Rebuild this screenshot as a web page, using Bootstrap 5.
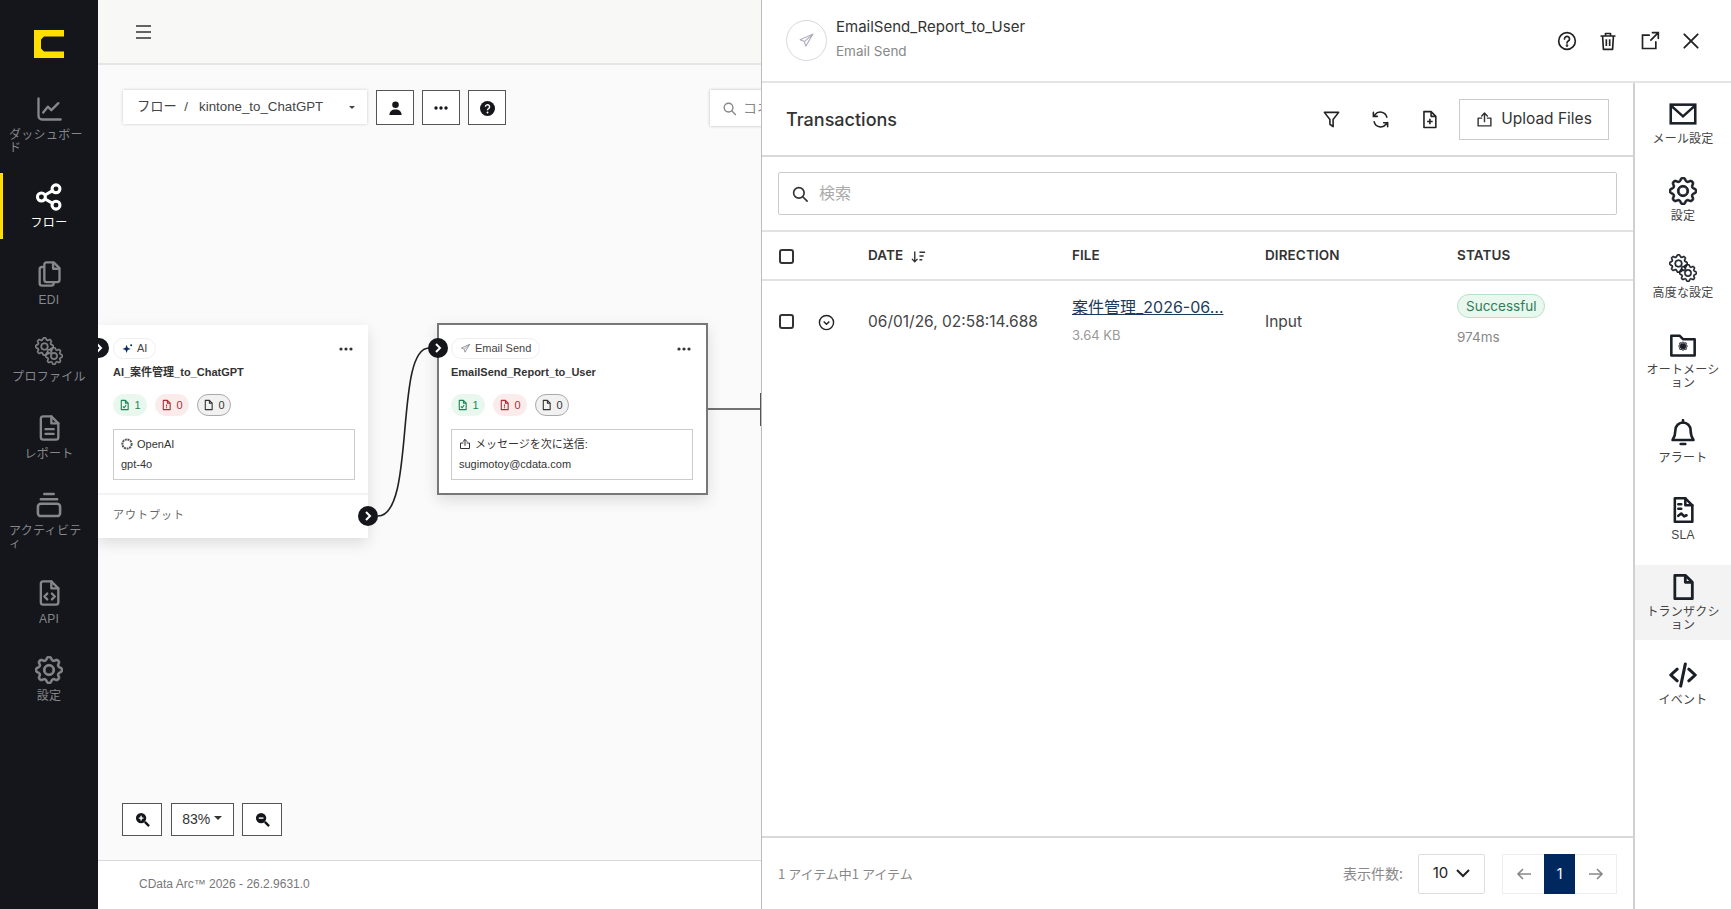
<!DOCTYPE html>
<html lang="ja">
<head>
  <meta charset="UTF-8">
  <meta name="viewport" content="width=device-width, initial-scale=1.0">
  <title>CData Arc</title>
  <link href="https://cdn.jsdelivr.net/npm/bootstrap@5.3.2/dist/css/bootstrap.min.css" rel="stylesheet">
  <style>
    html, body { height: 100%; overflow: hidden; }
    body { font-family: "Liberation Sans", "Noto Sans CJK JP", sans-serif; color: #333; background: #fff; }
    .app-shell { height: 909px; }

    /* left navigation */
    .side-nav { width: 98px; background: #14161b; flex-shrink: 0; }
    .side-logo { height: 85px; padding: 30px 0 0 34px; }
    .nav-cell { padding: 10px 0 9px; margin-bottom: 11px; color: #85878a; font-size: 12px; line-height: 13px; letter-spacing: .3px; border-left: 3px solid transparent; margin-right: 3px; }
    .nav-cell.wrapped { margin-bottom: 9px; }
    .nav-cell.wrapped span { width: 80px; }
    .nav-cell.current { color: #fff; border-left-color: #ffdf00; }
    .nav-cell svg { width: 28px; height: 28px; margin-bottom: 6px; }

    /* flow canvas */
    .flow-area { min-width: 0; background: #fafafa; }
    .top-strip { height: 65px; background: #f8f8f7; border-bottom: 2px solid #e6e6e6; padding-left: 38px; }
    .flow-canvas { overflow: hidden; padding: 25px 0 0 25px; }
    .crumb-box { width: 244px; height: 34px; background: #fff; box-shadow: 0 0 3px rgba(0,0,0,.2); border-radius: 0; font-size: 13.3px; color: #444; padding: 0 11px 0 13px; flex-shrink: 0; margin-right: 9px; }
    .crumb-box::after { margin-left: auto; }
    .sq-btn { width: 38px; height: 35px; border: 1.5px solid #555; border-radius: 0; background: #fff; padding: 0; flex-shrink: 0; }
    .sq-btn.zoom-btn { width: 40px; height: 33px; }
    .sq-btn.zoom-pct { width: 63px; height: 33px; font-size: 14px; color: #333; }
    .canvas-search { width: 200px; height: 36px; background: #fff; box-shadow: 0 0 3px rgba(0,0,0,.25); margin-left: 204px; padding-left: 12px; color: #888; font-size: 14px; flex-shrink: 0; gap: 6px; }
    .flow-lines { position: absolute; left: 0; top: -1px; width: 664px; height: 732px; }
    .flow-node { position: absolute; background: #fff; box-shadow: 0 5px 14px rgba(0,0,0,.12); font-size: 11px; }
    .node-one { left: 0; top: 260px; width: 270px; height: 213px; padding: 13px 13px 0 15px; }
    .node-two { left: 339px; top: 258px; width: 271px; height: 172px; padding: 13px 13px 0 12px; border: 2px solid #777; }
    .kind-chip { height: 21px; padding: 0 8px; background: #fff; border: 1px solid #eee; border-radius: 11px; font-size: 11px; color: #444; }
    .node-dots { margin-right: 2px; }
    .node-name { font-size: 11px; font-weight: 700; color: #333; margin: 6px 0 15px; line-height: 14px; white-space: nowrap; }
    .count-pill { width: 34px; height: 22px; padding: 0; font-size: 11px; font-weight: 400; border-radius: 11px; }
    .count-pill svg { width: 11px; height: 14px; }
    .count-ok { background: #e9f7ef; color: #198754; }
    .count-bad { background: #fbecec; color: #b02a37; }
    .count-idle { background: #f1f1f1; color: #333; border: 1px solid #aaa; }
    .node-info { border: 1px solid #ccc; height: 51px; padding: 4px 7px; margin-top: 13px; line-height: 20px; color: #333; font-size: 11px; }
    .node-out { margin: 13px -13px 0 -15px; border-top: 2px solid #f3f3f3; padding: 12px 15px; color: #666; font-size: 11px; letter-spacing: 1px; }
    .port { position: absolute; width: 20px; height: 20px; border-radius: 50%; background: #14161b; z-index: 2; }
    .port-in-one { left: -9px; top: 273px; }
    .port-in-two { left: 330px; top: 273px; }
    .port-out-one { left: 260px; top: 441px; }
    .zoom-tools { position: absolute; left: 24px; top: 738px; gap: 8.5px; }
    .flow-foot { height: 49px; background: #fff; border-top: 1px solid #d8d8d8; padding: 0 0 2px 41px; font-size: 12px; color: #777; }

    /* right panel */
    .side-panel { width: 970px; flex-shrink: 0; background: #fff; border-left: 1px solid #bbb; font-family: Inter, "Noto Sans CJK JP", sans-serif; z-index: 3; }
    .panel-head { height: 83px; border-bottom: 2px solid #e4e4e4; padding: 0 30px 0 24px; }
    .plane-ring { width: 41px; height: 41px; border: 1px solid #d5d9de; border-radius: 50%; color: #aab; margin-right: 9px; }
    .panel-title { font-size: 15px; line-height: 20px; color: #333; margin-top: -4px; }
    .panel-sub { font-size: 13.5px; line-height: 20px; color: #888; margin-top: 4px; }
    .head-icon { width: 20px; height: 20px; margin-left: 21.5px; color: #222; }
    .tx-bar { height: 74px; border-bottom: 2px solid #d9d9d9; padding: 0 24px 0 24px; }
    .tx-title { font-size: 18px; font-weight: 500; color: #333; }
    .tx-icon { width: 19px; height: 19px; margin-right: 30px; color: #222; }
    .tx-icon.last-tool { margin-right: 20px; }
    .upload-btn { width: 150px; height: 41px; border: 1px solid #ccc; border-radius: 0; font-size: 15.5px; color: #333; background: #fff; padding: 0; }
    .search-strip { height: 75px; border-bottom: 2px solid #e2e2e2; padding: 15px 16px 0 16px; }
    .search-wrap { height: 43px; border: 1px solid #ccc; border-radius: 2px; }
    .search-wrap .input-group-text { background: #fff; border: 0; padding: 0 0 0 12px; }
    .search-wrap .search-glass { width: 18px; height: 18px; color: #333; }
    .search-wrap .form-control { border: 0; font-size: 16px; padding: 0 0 3px 11px; box-shadow: none; font-family: "Noto Sans CJK JP", sans-serif; }
    .search-wrap .form-control::placeholder { color: #aaa; }
    .tx-table { table-layout: fixed; width: 871px; margin: 0; }
    .tx-table th { height: 48px; font-size: 13.5px; font-weight: 600; letter-spacing: .1px; color: #333; border-bottom: 2px solid #e2e2e2; padding: 0 0 0 11px; vertical-align: middle; }
    .tx-table td { height: 82px; border: 0; padding: 0 0 0 11px; vertical-align: middle; font-size: 15.5px; color: #444; }
    .tx-table td.row-toggle { padding-left: 8px; }
    .tx-table .col-check { width: 48px; }
    .tx-table .col-toggle { width: 47px; }
    .tx-table .col-date { width: 204px; }
    .tx-table .col-file { width: 193px; }
    .tx-table .col-dir { width: 192px; }
    .tx-table .form-check-input { width: 15px; height: 15px; margin: 4px 0 0 6px; border: 2px solid #333; border-radius: 3px; }
    .tx-table .file-link { display: block; font-size: 16px; color: #1c3a5a; white-space: nowrap; margin-top: -3px; line-height: 22px; }
    .file-size { font-size: 13px; color: #999; margin-top: 8px; line-height: 18px; }
    .done-pill { display: inline-block; padding: 0 8px; height: 24px; line-height: 22px; background: #e9f7ef; border: 1px solid #b6e2c8; border-radius: 12px; font-size: 13.5px; font-weight: 400; color: #2e7d55; margin-top: -4px; }
    .took-time { font-size: 13.5px; color: #888; line-height: 18px; margin: 10px 0 4px; }
    .panel-foot { height: 73px; border-top: 2px solid #d9d9d9; padding: 0 16px; font-size: 13px; color: #888; font-family: "Noto Sans CJK JP", sans-serif; }
    .per-page { font-size: 14px; }
    .size-pick { width: 67px; height: 40px; border: 1px solid #ddd; border-radius: 2px; font-family: Inter, sans-serif; font-size: 15px; color: #222; background: #fff; margin: 0 17px 0 15px; padding: 0; }
    .pager .page-link { height: 40px; width: 43px; padding: 0; display: flex; align-items: center; justify-content: center; border-radius: 0 !important; border-color: #eee; color: #888; background: #fff; }
    .pager .page-item.active .page-link { width: 31px; background: #00285e; border-color: #00285e; color: #fff; font-family: Inter, sans-serif; font-size: 14px; }
    .tool-rail { width: 98px; flex-shrink: 0; border-left: 2px solid #d0d0d0; padding-top: 9px; }
    .rail-cell { padding: 8px 0; margin-bottom: 15px; font-size: 12px; line-height: 13px; color: #444; font-family: "Liberation Sans", "Noto Sans CJK JP", sans-serif; letter-spacing: .2px; }
    .rail-cell.wrapped { margin-bottom: 13px; }
    .rail-cell.current { background: #f3f3f3; }
    .rail-cell svg { width: 28px; height: 28px; margin-bottom: 5px; color: #1b1f27; }
  </style>
</head>
<body>
  <svg width="0" height="0" class="position-absolute">
    <defs>
      <symbol id="ic-gear" viewBox="0 0 16 16"><g fill="currentColor" stroke="currentColor" stroke-width=".5"><path d="M8 4.754a3.246 3.246 0 1 0 0 6.492 3.246 3.246 0 0 0 0-6.492zM5.754 8a2.246 2.246 0 1 1 4.492 0 2.246 2.246 0 0 1-4.492 0z"/><path d="M9.796 1.343c-.527-1.79-3.065-1.79-3.592 0l-.094.319a.873.873 0 0 1-1.255.52l-.292-.16c-1.64-.892-3.433.902-2.54 2.541l.159.292a.873.873 0 0 1-.52 1.255l-.319.094c-1.79.527-1.79 3.065 0 3.592l.319.094a.873.873 0 0 1 .52 1.255l-.16.292c-.892 1.64.901 3.434 2.541 2.54l.292-.159a.873.873 0 0 1 1.255.52l.094.319c.527 1.79 3.065 1.79 3.592 0l.094-.319a.873.873 0 0 1 1.255-.52l.292.16c1.64.893 3.434-.902 2.54-2.541l-.159-.292a.873.873 0 0 1 .52-1.255l.319-.094c1.79-.527 1.79-3.065 0-3.592l-.319-.094a.873.873 0 0 1-.52-1.255l.16-.292c.893-1.64-.902-3.433-2.541-2.54l-.292.159a.873.873 0 0 1-1.255-.52l-.094-.319zm-2.633.283c.246-.835 1.428-.835 1.674 0l.094.319a1.873 1.873 0 0 0 2.693 1.115l.291-.16c.764-.415 1.6.42 1.184 1.185l-.159.292a1.873 1.873 0 0 0 1.116 2.692l.318.094c.835.246.835 1.428 0 1.674l-.319.094a1.873 1.873 0 0 0-1.115 2.693l.16.291c.415.764-.42 1.6-1.185 1.184l-.291-.159a1.873 1.873 0 0 0-2.693 1.116l-.094.318c-.246.835-1.428.835-1.674 0l-.094-.319a1.873 1.873 0 0 0-2.692-1.115l-.292.16c-.764.415-1.6-.42-1.184-1.185l.159-.291A1.873 1.873 0 0 0 1.945 8.93l-.319-.094c-.835-.246-.835-1.428 0-1.674l.319-.094A1.873 1.873 0 0 0 3.06 4.377l-.16-.292c-.415-.764.42-1.6 1.185-1.184l.292.159a1.873 1.873 0 0 0 2.692-1.115l.094-.319z"/></g></symbol>
      <symbol id="ic-gears" viewBox="0 0 28 28"><use href="#ic-gear" x="0" y="0" width="19" height="19"/><use href="#ic-gear" x="10" y="10" width="18" height="18"/></symbol>
      <symbol id="ic-chart" viewBox="0 0 24 24"><g fill="none" stroke="currentColor" stroke-width="2" stroke-linecap="round" stroke-linejoin="round"><path d="M3 3v15a3 3 0 0 0 3 3h16"/><path d="M7 15l4-5 3 3 6-6"/></g></symbol>
      <symbol id="ic-share" viewBox="0 0 24 24"><g fill="none" stroke="currentColor" stroke-width="2.6"><circle cx="18" cy="5" r="3.4"/><circle cx="5.5" cy="12" r="3.4"/><circle cx="18" cy="19" r="3.4"/><path d="M8.6 10.3l6.2-3.6M8.6 13.7l6.2 3.6"/></g></symbol>
      <symbol id="ic-files" viewBox="0 0 24 24"><g fill="none" stroke="currentColor" stroke-width="2" stroke-linejoin="round"><path d="M10 2h6l5 5v10a2 2 0 0 1-2 2h-9a2 2 0 0 1-2-2V4a2 2 0 0 1 2-2z"/><path d="M15.5 2v5.500H21"/><path d="M8 6H6a2 2 0 0 0-2 2v12a2 2 0 0 0 2 2h8a2 2 0 0 0 2-2v-1"/></g></symbol>
      <symbol id="ic-report" viewBox="0 0 24 24"><g fill="none" stroke="currentColor" stroke-width="2" stroke-linejoin="round" stroke-linecap="round"><path d="M7 2h7l6 6v12a2 2 0 0 1-2 2H7a2 2 0 0 1-2-2V4a2 2 0 0 1 2-2z"/><path d="M14 2v6h6"/><path d="M9 13h7M9 17h7"/></g></symbol>
      <symbol id="ic-stack" viewBox="0 0 24 24"><g fill="none" stroke="currentColor" stroke-width="2.200" stroke-linecap="round"><path d="M8 2.500h8M5 7h14"/><rect x="2.500" y="11" width="19" height="10.500" rx="2.500"/></g></symbol>
      <symbol id="ic-filecode" viewBox="0 0 24 24"><g fill="none" stroke="currentColor" stroke-width="2" stroke-linejoin="round" stroke-linecap="round"><path d="M7 2h7l6 6v12a2 2 0 0 1-2 2H7a2 2 0 0 1-2-2V4a2 2 0 0 1 2-2z"/><path d="M14 2v6h6"/><path d="M10.500 12.500l-2.500 2.500 2.500 2.500M14.500 12.500l2.500 2.500-2.500 2.500"/></g></symbol>
      <symbol id="ic-mail" viewBox="0 0 24 24"><g fill="none" stroke="currentColor" stroke-width="2.200"><rect x="1.500" y="4" width="21" height="16"/><path d="M2 5l10 9 10-9"/></g></symbol>
      <symbol id="ic-folder" viewBox="0 0 24 24"><g fill="none" stroke="currentColor" stroke-width="2.200" stroke-linejoin="round"><path d="M2 4h7l3 3h10v14H2z"/></g><use href="#ic-gear" x="8" y="9" width="8" height="8"/><circle cx="12" cy="13" r="2.600" fill="currentColor"/></symbol>
      <symbol id="ic-bell" viewBox="0 0 24 24"><g fill="none" stroke="currentColor" stroke-width="2.200" stroke-linecap="round" stroke-linejoin="round"><path d="M12 3a6.500 6.500 0 0 0-6.500 6.500c0 5-1.500 7-2.500 8.500h18c-1-1.500-2.500-3.500-2.500-8.500A6.500 6.500 0 0 0 12 3z"/><path d="M12 1v2M10 21.500h4"/></g></symbol>
      <symbol id="ic-sla" viewBox="0 0 24 24"><g fill="none" stroke="currentColor" stroke-width="2.200" stroke-linejoin="round" stroke-linecap="round"><path d="M5 2h9l6 6v14H5z"/><path d="M14 2v6h6"/><path d="M8 7h2.500M8 11h2.500M8 17l2.500-2 2.500 2.500 2-1"/></g></symbol>
      <symbol id="ic-file" viewBox="0 0 24 24"><g fill="none" stroke="currentColor" stroke-width="2.400" stroke-linejoin="round"><path d="M5 2h9l6 6v14H5z"/><path d="M14 2v6h6"/></g></symbol>
      <symbol id="ic-file-ok" viewBox="0 0 24 24"><g fill="none" stroke="currentColor" stroke-width="2.400" stroke-linejoin="round"><path d="M5 2h9l6 6v14H5z"/><path d="M14 2v6h6M8.500 15l3 3 4-6"/></g></symbol>
      <symbol id="ic-file-bad" viewBox="0 0 24 24"><g fill="none" stroke="currentColor" stroke-width="2.400" stroke-linejoin="round"><path d="M5 2h9l6 6v14H5z"/><path d="M14 2v6h6M12 11v4M12 17v2"/></g></symbol>
      <symbol id="ic-code" viewBox="0 0 24 24"><g fill="none" stroke="currentColor" stroke-width="2.600" stroke-linecap="round" stroke-linejoin="round"><path d="M7 7l-5.500 5L7 17M17 7l5.500 5-5.500 5M14 2.500L10 21.500"/></g></symbol>
      <symbol id="ic-plane" viewBox="0 0 24 24"><g fill="none" stroke="currentColor" stroke-width="1.500" stroke-linejoin="round"><path d="M21 3L3 11l6 2.500L11 20z"/><path d="M21 3L9 13.500"/></g></symbol>
      <symbol id="ic-search" viewBox="0 0 24 24"><g fill="none" stroke="currentColor" stroke-width="2.200" stroke-linecap="round"><circle cx="10.500" cy="10.500" r="7"/><path d="M16 16l5.500 5.500"/></g></symbol>
      <symbol id="ic-upload" viewBox="0 0 24 24"><g fill="none" stroke="currentColor" stroke-width="2" stroke-linejoin="round" stroke-linecap="round"><path d="M12 15V3M8 7l4-4 4 4M8 10H3v11h18V10h-5"/></g></symbol>
      <symbol id="ic-chev" viewBox="0 0 8 10"><path d="M2 1l4 4-4 4" fill="none" stroke="#fff" stroke-width="2"/></symbol>
      <symbol id="ic-dots" viewBox="0 0 14 4"><g fill="currentColor"><circle cx="2" cy="2" r="1.600"/><circle cx="7" cy="2" r="1.600"/><circle cx="12" cy="2" r="1.600"/></g></symbol>
    </defs>
  </svg>

  <div class="app-shell d-flex">
    <nav class="side-nav d-flex flex-column">
      <div class="side-logo">
        <svg width="30" height="28" viewBox="0 0 30 28"><path fill="#ffdf00" d="M0 0h30v6.500H10L7 9.500v9l3 3h20V28H0z"/></svg>
      </div>
      <div class="nav-cell wrapped d-flex flex-column align-items-center"><svg><use href="#ic-chart"/></svg><span>ダッシュボー<br>ド</span></div>
      <div class="nav-cell current d-flex flex-column align-items-center"><svg><use href="#ic-share"/></svg><span>フロー</span></div>
      <div class="nav-cell d-flex flex-column align-items-center"><svg><use href="#ic-files"/></svg><span>EDI</span></div>
      <div class="nav-cell d-flex flex-column align-items-center"><svg><use href="#ic-gears"/></svg><span>プロファイル</span></div>
      <div class="nav-cell d-flex flex-column align-items-center"><svg><use href="#ic-report"/></svg><span>レポート</span></div>
      <div class="nav-cell wrapped d-flex flex-column align-items-center"><svg><use href="#ic-stack"/></svg><span>アクティビテ<br>ィ</span></div>
      <div class="nav-cell d-flex flex-column align-items-center"><svg><use href="#ic-filecode"/></svg><span>API</span></div>
      <div class="nav-cell d-flex flex-column align-items-center"><svg><use href="#ic-gear"/></svg><span>設定</span></div>
    </nav>

    <main class="flow-area flex-grow-1 d-flex flex-column">
      <div class="top-strip d-flex align-items-center">
        <svg width="16" height="14" viewBox="0 0 16 14"><path d="M0 1h15M0 7h15M0 13h15" stroke="#333" stroke-width="1.600"/></svg>
      </div>
      <div class="flow-canvas position-relative flex-grow-1">
        <div class="d-flex align-items-start">
          <button class="btn crumb-box dropdown-toggle d-flex align-items-center" type="button"><span>フロー &nbsp;/ &nbsp; kintone_to_ChatGPT</span></button>
          <button class="btn sq-btn me-2" type="button"><svg width="15" height="15" viewBox="0 0 16 16" fill="#14161b"><circle cx="8" cy="4" r="3.500"/><path d="M1.500 15c0-4 2.500-6 6.500-6s6.500 2 6.500 6z"/></svg></button>
          <button class="btn sq-btn me-2" type="button"><svg width="14" height="4" viewBox="0 0 14 4" fill="#14161b"><circle cx="2" cy="2" r="1.700"/><circle cx="7" cy="2" r="1.700"/><circle cx="12" cy="2" r="1.700"/></svg></button>
          <button class="btn sq-btn" type="button"><svg width="15" height="15" viewBox="0 0 16 16"><circle cx="8" cy="8" r="8" fill="#14161b"/><path d="M5.800 6.200a2.200 2.200 0 1 1 3.400 1.800c-.8.500-1.200 1-1.200 1.800" fill="none" stroke="#fff" stroke-width="1.500"/><circle cx="8" cy="12.300" r="1" fill="#fff"/></svg></button>
          <div class="canvas-search d-flex align-items-center"><svg width="15" height="15"><use href="#ic-search"/></svg><span>コネ</span></div>
        </div>

        <svg class="flow-lines" viewBox="0 0 664 732">
          <path d="M280 452 C 318 452, 296 284, 331 284" fill="none" stroke="#222" stroke-width="1.600"/>
          <path d="M610 345 H663" fill="none" stroke="#444" stroke-width="1.600"/>
          <path d="M663 329 V362" fill="none" stroke="#555" stroke-width="2"/>
        </svg>

        <div class="flow-node node-one">
          <div class="d-flex align-items-center justify-content-between">
            <span class="kind-chip d-inline-flex align-items-center gap-1"><svg width="11" height="11" viewBox="0 0 12 12" fill="#0d2a5c"><path d="M5 2l1.200 3.300L9.500 6.500 6.200 7.700 5 11 3.800 7.700.5 6.500l3.300-1.200z"/><circle cx="10" cy="2.500" r="1.100"/></svg>AI</span>
            <svg class="node-dots" width="14" height="4"><use href="#ic-dots"/></svg>
          </div>
          <div class="node-name">AI_案件管理_to_ChatGPT</div>
          <div class="d-flex gap-2">
            <span class="badge count-pill count-ok d-inline-flex align-items-center justify-content-center gap-1"><svg><use href="#ic-file-ok"/></svg>1</span>
            <span class="badge count-pill count-bad d-inline-flex align-items-center justify-content-center gap-1"><svg><use href="#ic-file-bad"/></svg>0</span>
            <span class="badge count-pill count-idle d-inline-flex align-items-center justify-content-center gap-1"><svg><use href="#ic-file"/></svg>0</span>
          </div>
          <div class="node-info">
            <div class="d-flex align-items-center gap-1"><svg width="12" height="12" viewBox="0 0 12 12"><circle cx="6" cy="6" r="4.600" fill="none" stroke="#555" stroke-width="2" stroke-dasharray="2 .7"/></svg><span>OpenAI</span></div>
            <div>gpt-4o</div>
          </div>
          <div class="node-out">アウトプット</div>
        </div>

        <div class="flow-node node-two">
          <div class="d-flex align-items-center justify-content-between">
            <span class="kind-chip d-inline-flex align-items-center gap-1"><svg class="text-secondary" width="11" height="11"><use href="#ic-plane"/></svg><span>Email Send</span></span>
            <svg class="node-dots" width="14" height="4"><use href="#ic-dots"/></svg>
          </div>
          <div class="node-name">EmailSend_Report_to_User</div>
          <div class="d-flex gap-2">
            <span class="badge count-pill count-ok d-inline-flex align-items-center justify-content-center gap-1"><svg><use href="#ic-file-ok"/></svg>1</span>
            <span class="badge count-pill count-bad d-inline-flex align-items-center justify-content-center gap-1"><svg><use href="#ic-file-bad"/></svg>0</span>
            <span class="badge count-pill count-idle d-inline-flex align-items-center justify-content-center gap-1"><svg><use href="#ic-file"/></svg>0</span>
          </div>
          <div class="node-info">
            <div class="d-flex align-items-center gap-1"><svg width="12" height="12"><use href="#ic-upload"/></svg><span>メッセージを次に送信:</span></div>
            <div>sugimotoy@cdata.com</div>
          </div>
        </div>

        <span class="port port-in-one d-flex align-items-center justify-content-center"><svg width="8" height="10"><use href="#ic-chev"/></svg></span>
        <span class="port port-in-two d-flex align-items-center justify-content-center"><svg width="8" height="10"><use href="#ic-chev"/></svg></span>
        <span class="port port-out-one d-flex align-items-center justify-content-center"><svg width="8" height="10"><use href="#ic-chev"/></svg></span>

        <div class="zoom-tools d-flex">
          <button class="btn sq-btn zoom-btn d-flex align-items-center justify-content-center" type="button"><svg width="15" height="15" viewBox="0 0 16 16"><circle cx="6.500" cy="6.500" r="5.500" fill="#14161b"/><path d="M10.500 10.500L15 15" stroke="#14161b" stroke-width="2.500"/><path d="M4 6.500h5M6.500 4v5" stroke="#fff" stroke-width="1.500"/></svg></button>
          <button class="btn sq-btn zoom-pct dropdown-toggle" type="button">83%</button>
          <button class="btn sq-btn zoom-btn d-flex align-items-center justify-content-center" type="button"><svg width="15" height="15" viewBox="0 0 16 16"><circle cx="6.500" cy="6.500" r="5.500" fill="#14161b"/><path d="M10.500 10.500L15 15" stroke="#14161b" stroke-width="2.500"/><path d="M4 6.500h5" stroke="#fff" stroke-width="1.500"/></svg></button>
        </div>
      </div>
      <footer class="flow-foot d-flex align-items-center">CData Arc™ 2026 - 26.2.9631.0</footer>
    </main>

    <aside class="side-panel d-flex flex-column">
      <header class="panel-head d-flex align-items-center">
        <span class="plane-ring d-flex align-items-center justify-content-center"><svg width="17" height="17"><use href="#ic-plane"/></svg></span>
        <div class="flex-grow-1">
          <div class="panel-title">EmailSend_Report_to_User</div>
          <div class="panel-sub">Email Send</div>
        </div>
        <svg class="head-icon" viewBox="0 0 24 24" fill="none" stroke="currentColor" stroke-width="2"><circle cx="12" cy="12" r="10"/><path d="M9 9.500a3 3 0 1 1 4.500 2.600c-1 .6-1.500 1.200-1.500 2.400" stroke-linecap="round"/><circle cx="12" cy="17.500" r=".6"/></svg>
        <svg class="head-icon" viewBox="0 0 24 24" fill="none" stroke="currentColor" stroke-width="2" stroke-linejoin="round"><path d="M3 6h18M9 6V3h6v3M5.500 6l1 16h11l1-16M10 10v8M14 10v8"/></svg>
        <svg class="head-icon" viewBox="0 0 24 24" fill="none" stroke="currentColor" stroke-width="2" stroke-linecap="round"><path d="M11 5H3v16h16v-8M13 11L22 2M15 2h7v7"/></svg>
        <svg class="head-icon" viewBox="0 0 24 24" fill="none" stroke="currentColor" stroke-width="2.200" stroke-linecap="round"><path d="M4 4l16 16M20 4L4 20"/></svg>
      </header>

      <div class="d-flex flex-grow-1 overflow-hidden">
        <section class="flex-grow-1 d-flex flex-column overflow-hidden">
          <div class="tx-bar d-flex align-items-center">
            <div class="tx-title flex-grow-1">Transactions</div>
            <svg class="tx-icon" viewBox="0 0 24 24" fill="none" stroke="currentColor" stroke-width="2" stroke-linejoin="round"><path d="M3 3h18l-7 9v9l-4-3v-6z"/></svg>
            <svg class="tx-icon" viewBox="0 0 24 24" fill="none" stroke="currentColor" stroke-width="2" stroke-linecap="round"><path d="M20 9a8.500 8.500 0 0 0-15-3l-2 2M4 15a8.500 8.500 0 0 0 15 3l2-2M3 3v5h5M21 21v-5h-5"/></svg>
            <svg class="tx-icon last-tool" viewBox="0 0 24 24" fill="none" stroke="currentColor" stroke-width="2" stroke-linejoin="round"><path d="M5 2h9l6 6v14H5z"/><path d="M14 2v6h6M12.500 11v7M9 14.500h7"/></svg>
            <button class="btn upload-btn d-flex align-items-center justify-content-center gap-2" type="button"><svg width="17" height="17"><use href="#ic-upload"/></svg>Upload Files</button>
          </div>
          <div class="search-strip">
            <div class="input-group search-wrap">
              <span class="input-group-text"><svg class="search-glass"><use href="#ic-search"/></svg></span>
              <input type="text" class="form-control" placeholder="検索">
            </div>
          </div>
          <table class="table tx-table">
            <colgroup><col class="col-check"><col class="col-toggle"><col class="col-date"><col class="col-file"><col class="col-dir"><col></colgroup>
            <thead>
              <tr>
                <th><input class="form-check-input" type="checkbox"></th>
                <th></th>
                <th>DATE <svg class="ms-1" width="15" height="14" viewBox="0 0 16 14" fill="none" stroke="#333" stroke-width="1.500"><path d="M4 1v11M1 9l3 3 3-3M9 2h6M9 6h4.500M9 10h3"/></svg></th>
                <th>FILE</th>
                <th>DIRECTION</th>
                <th>STATUS</th>
              </tr>
            </thead>
            <tbody>
              <tr>
                <td><input class="form-check-input" type="checkbox"></td>
                <td class="row-toggle"><svg width="17" height="17" viewBox="0 0 24 24" fill="none" stroke="#222" stroke-width="2"><circle cx="12" cy="12" r="10"/><path d="M8 10.500l4 4 4-4"/></svg></td>
                <td>06/01/26, 02:58:14.688</td>
                <td><a class="file-link" href="#">案件管理_2026-06…</a><div class="file-size">3.64 KB</div></td>
                <td>Input</td>
                <td><span class="done-pill">Successful</span><div class="took-time">974ms</div></td>
              </tr>
            </tbody>
          </table>
          <div class="flex-grow-1"></div>
          <div class="panel-foot d-flex align-items-center">
            <span class="flex-grow-1">1 アイテム中1 アイテム</span>
            <span class="per-page">表示件数:</span>
            <button class="btn size-pick d-flex align-items-center justify-content-center gap-2" type="button">10 <svg width="14" height="9" viewBox="0 0 14 9" fill="none" stroke="#222" stroke-width="2"><path d="M1 1l6 6 6-6"/></svg></button>
            <ul class="pagination pager mb-0">
              <li class="page-item"><a class="page-link" href="#"><svg width="16" height="14" viewBox="0 0 16 14" fill="none" stroke="#888" stroke-width="1.600"><path d="M15 7H2M7 2L2 7l5 5"/></svg></a></li>
              <li class="page-item active"><a class="page-link" href="#">1</a></li>
              <li class="page-item"><a class="page-link" href="#"><svg width="16" height="14" viewBox="0 0 16 14" fill="none" stroke="#888" stroke-width="1.600"><path d="M1 7h13M9 2l5 5-5 5"/></svg></a></li>
            </ul>
          </div>
        </section>

        <div class="tool-rail">
          <div class="rail-cell text-center"><svg class="d-block mx-auto"><use href="#ic-mail"/></svg>メール設定</div>
          <div class="rail-cell text-center"><svg class="d-block mx-auto"><use href="#ic-gear"/></svg>設定</div>
          <div class="rail-cell text-center"><svg class="d-block mx-auto"><use href="#ic-gears"/></svg>高度な設定</div>
          <div class="rail-cell wrapped text-center"><svg class="d-block mx-auto"><use href="#ic-folder"/></svg>オートメーシ<br>ョン</div>
          <div class="rail-cell text-center"><svg class="d-block mx-auto"><use href="#ic-bell"/></svg>アラート</div>
          <div class="rail-cell text-center"><svg class="d-block mx-auto"><use href="#ic-sla"/></svg>SLA</div>
          <div class="rail-cell wrapped current text-center"><svg class="d-block mx-auto"><use href="#ic-file"/></svg>トランザクシ<br>ョン</div>
          <div class="rail-cell text-center"><svg class="d-block mx-auto"><use href="#ic-code"/></svg>イベント</div>
        </div>
      </div>
    </aside>
  </div>

  <script src="https://cdn.jsdelivr.net/npm/bootstrap@5.3.2/dist/js/bootstrap.bundle.min.js"></script>
</body>
</html>
